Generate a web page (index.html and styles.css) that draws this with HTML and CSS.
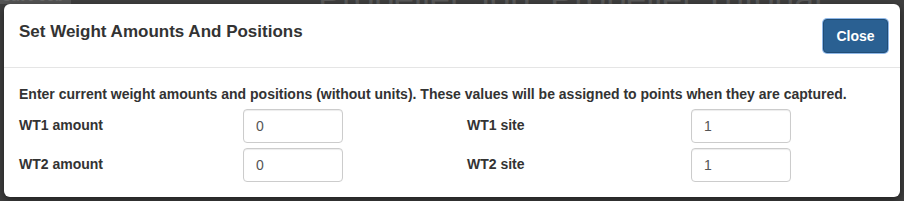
FILE: index.html
```html
<!DOCTYPE html>
<html>
<head>
<meta charset="utf-8">
<link rel="stylesheet" href="styles.css">
</head>
<body>
<div class="backdrop">
  <div class="behind">
    <span class="behind-small">Save Job</span>
    <span class="behind-big">Propeller Job, Propeller Tutorial</span>
  </div>
  <div class="modal">
    <div class="modal-header">
      <h4 class="modal-title">Set Weight Amounts And Positions</h4>
      <button class="btn-close" type="button">Close</button>
    </div>
    <div class="modal-body">
      <p class="intro">Enter current weight amounts and positions (without units). These values will be assigned to points when they are captured.</p>
      <div class="grid">
        <label class="lbl">WT1 amount</label>
        <div class="cell"><input class="field" type="text" value="0"></div>
        <label class="lbl">WT1 site</label>
        <div class="cell"><input class="field" type="text" value="1"></div>
        <label class="lbl">WT2 amount</label>
        <div class="cell"><input class="field" type="text" value="0"></div>
        <label class="lbl">WT2 site</label>
        <div class="cell"><input class="field" type="text" value="1"></div>
      </div>
    </div>
  </div>
</div>
</body>
</html>
```

FILE: styles.css
```css
html, body {
  margin: 0;
  padding: 0;
  width: 904px;
  height: 201px;
  overflow: hidden;
}
body {
  font-family: "Liberation Sans", Arial, Helvetica, sans-serif;
  color: #333;
  background: #3d3d3d;
}
.backdrop {
  position: relative;
  width: 904px;
  height: 201px;
  padding: 4px;
  box-sizing: border-box;
  background: #3f3f3f;
}
.behind {
  position: absolute;
  left: 0;
  top: -14px;
  width: 904px;
  height: 20px;
  color: #5c5c5c;
  white-space: nowrap;
}
.behind-small {
  position: absolute;
  left: -2px;
  top: 2px;
  font-size: 14px;
  font-weight: bold;
  color: #6a6a6a;
  background: #555;
  padding: 0 8px 0 4px;
}
.behind-big {
  position: absolute;
  left: 318px;
  top: -8px;
  font-size: 36px;
  color: #5a5a5a;
}
.modal {
  position: relative;
  width: 896px;
  height: 193px;
  background: #fff;
  border-radius: 6px;
  box-shadow: 0 3px 9px rgba(0,0,0,0.5);
  box-sizing: border-box;
}
.modal-header {
  display: flex;
  align-items: center;
  justify-content: space-between;
  padding: 15px 12px 15px 15px;
  border-bottom: 1px solid #e5e5e5;
  height: 64px;
  box-sizing: border-box;
}
.modal-title {
  margin: 0;
  font-size: 17px;
  font-weight: bold;
  line-height: 20px;
  margin-top: -7px;
  color: #333;
}
.btn-close {
  width: 65px;
  height: 34px;
  font-family: "Liberation Sans", Arial, sans-serif;
  font-size: 14px;
  font-weight: bold;
  color: #fff;
  background: #2a6092;
  border: 1px solid #214d76;
  border-radius: 4px;
  box-shadow: 0 0 0 1px #8fb8e8;
  padding: 0;
  margin: 0;
}
.modal-body {
  padding: 16px 0 0 0;
}
.intro {
  margin: 0 15px 5px 15px;
  font-size: 14px;
  font-weight: bold;
  line-height: 20px;
  white-space: nowrap;
}
.grid {
  display: grid;
  grid-template-columns: 224px 224px 224px 224px;
  row-gap: 5px;
}
.lbl {
  padding: 6px 15px 0 15px;
  font-size: 14px;
  font-weight: bold;
  line-height: 20px;
}
.cell {
  padding: 0 15px;
}
.field {
  display: block;
  width: 100px;
  height: 34px;
  box-sizing: border-box;
  border: 1px solid #ccc;
  border-radius: 4px;
  padding: 6px 12px;
  font-family: "Liberation Sans", Arial, sans-serif;
  font-size: 14px;
  color: #555;
  background: #fff;
  box-shadow: inset 0 1px 1px rgba(0,0,0,0.075);
  margin: 0;
}
```
